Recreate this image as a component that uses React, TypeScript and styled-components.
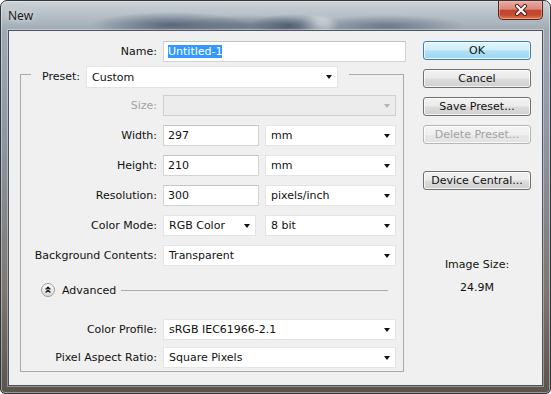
import styled, { createGlobalStyle } from "styled-components";

const Global = createGlobalStyle`
  html, body { margin: 0; padding: 0; background: #fff; }
  * { box-sizing: border-box; }
`;

const Window = styled.div`
  width: 551px; height: 394px;
  display: flex; flex-direction: column;
  padding: 0 7px 7px;
  border: 1px solid #30363d;
  border-radius: 7px 7px 5px 5px;
  box-shadow: inset 0 0 0 1px rgba(255,255,255,0.4);
  background:
    radial-gradient(ellipse 80px 13px at 170px 24px, rgba(35,50,75,0.6), transparent),
    radial-gradient(ellipse 70px 11px at 245px 25px, rgba(45,60,85,0.45), transparent),
    radial-gradient(ellipse 40px 12px at 288px 25px, rgba(35,50,75,0.6), transparent),
    radial-gradient(ellipse 20px 10px at 318px 23px, rgba(255,255,255,0.6), transparent),
    radial-gradient(ellipse 80px 11px at 385px 25px, rgba(50,65,90,0.5), transparent),
    linear-gradient(180deg, #ccd2d7 0px, #bac3ca 12px, #9ea9b3 30px, #8d96a0 140px, #7d7771 290px, #5b524b 394px);
`;

const TitleBar = styled.div`
  height: 29px; flex: none;
  display: flex; align-items: flex-start;
`;

const Title = styled.div`
  align-self: center;
  font: 12px "Noto Sans", "DejaVu Sans", sans-serif;
  color: #1b1b1b;
  text-shadow: 0 0 6px rgba(255,255,255,0.9);
`;

const CloseButton = styled.div`
  margin-left: auto;
  width: 45px; height: 19px;
  display: flex; align-items: center; justify-content: center;
  border: 1px solid #5a2219;
  border-top: none;
  border-radius: 0 0 5px 5px;
  box-shadow: inset 0 0 0 1px rgba(255,200,190,0.45);
  background: linear-gradient(180deg, #e9ac9f 0%, #d88a7b 45%, #c2432e 52%, #c44a31 78%, #e0804f 100%);
`;

const Client = styled.div`
  flex: 1;
  display: flex; gap: 17px;
  padding: 10px 10px 0 11px;
  background: #f0f0f0;
  border: 1px solid #4b545e;
  box-shadow: 0 0 0 1px rgba(255,255,255,0.35);
  font: 11px "DejaVu Sans", sans-serif;
  color: #111;
`;

const FormColumn = styled.div`
  width: 386px;
  display: flex; flex-direction: column;
`;

const Row = styled.div`
  display: flex; align-items: center; gap: 6px;
`;

const Label = styled.div<{ $w?: number; $off?: boolean }>`
  width: ${p => (p.$w ? `${p.$w}px` : "auto")};
  flex: none;
  text-align: right;
  white-space: nowrap;
  color: ${p => (p.$off ? "#a2a2a2" : "#111")};
`;

const TextField = styled.div<{ $w: number }>`
  width: ${p => p.$w}px; height: 21px;
  display: flex; align-items: center;
  padding-left: 4px;
  background: #fff;
  border: 1px solid #d4d4d4;
  border-top-color: #c4c4c4;
  white-space: nowrap;
`;

const Selected = styled.span`
  background: #3399ff;
  color: #fff;
`;

const Select = styled.div<{ $w: number; $h?: number; $off?: boolean; $mr?: number }>`
  width: ${p => p.$w}px; height: ${p => p.$h ?? 21}px;
  flex: none;
  margin-right: ${p => p.$mr ?? 0}px;
  display: flex; align-items: center; justify-content: space-between;
  padding: 0 5px 0 5px;
  background: ${p => (p.$off ? "#ececec" : "#fff")};
  border: 1px solid ${p => (p.$off ? "#cfcfcf" : "#e4e4e4")};
  white-space: nowrap;
`;

const Arrow = styled.span<{ $off?: boolean }>`
  width: 0; height: 0;
  border-left: 3.5px solid transparent;
  border-right: 3.5px solid transparent;
  border-top: 4px solid ${p => (p.$off ? "#b4b4b4" : "#111")};
`;

const Group = styled.div`
  margin-top: 12px;
  width: 384px;
  display: flex; flex-direction: column;
  border: 1px solid #a9a9a9;
  border-top: none;
  padding-bottom: 3px;
`;

const GroupHead = styled.div`
  margin-top: -8px;
  height: 22px;
  display: flex; align-items: flex-start;
`;

const Tick = styled.div`
  width: 10px; margin-top: 8px;
  border-top: 1px solid #a9a9a9;
`;

const HeadLabel = styled.div`
  margin-left: 11px; margin-right: 6px;
  line-height: 22px;
`;

const Rule = styled.div`
  flex: 1;
  margin-left: 11px;
  margin-top: 8px;
  border-top: 1px solid #a9a9a9;
`;

const Fields = styled.div<{ $gap: number; $top: number }>`
  display: flex; flex-direction: column;
  gap: ${p => p.$gap}px;
  margin-top: ${p => p.$top}px;
`;

const AdvancedRow = styled.div`
  margin-top: 17px;
  height: 14px;
  display: flex; align-items: center;
  padding: 0 15px 0 20px;
`;

const AdvancedText = styled.span`
  margin-left: 7px; margin-right: 5px;
`;

const AdvLine = styled.div`
  flex: 1;
  border-top: 1px solid #a9a9a9;
`;

const SideColumn = styled.div`
  width: 108px;
  display: flex; flex-direction: column; align-items: stretch;
`;

const Buttons = styled.div`
  display: flex; flex-direction: column; gap: 9px;
`;

const Button = styled.div<{ $primary?: boolean; $off?: boolean; $top?: number }>`
  height: 19px;
  margin-top: ${p => p.$top ?? 0}px;
  display: flex; align-items: center; justify-content: center;
  border-radius: 3px;
  border: 1px solid ${p => (p.$primary ? "#3c7fb1" : p.$off ? "#b4b7ba" : "#707070")};
  color: ${p => (p.$off ? "#a0a0a0" : "#111")};
  box-shadow: inset 0 0 0 1px rgba(255,255,255,0.75);
  background: ${p =>
    p.$primary
      ? "linear-gradient(180deg, #e4f5fd 0%, #cdeefc 48%, #b1e1f7 52%, #a0d7f2 100%)"
      : p.$off
      ? "linear-gradient(180deg, #f4f4f4 0%, #f0f0f0 50%, #e8e8e8 52%, #e2e2e2 100%)"
      : "linear-gradient(180deg, #f2f2f2 0%, #ebebeb 48%, #dddddd 52%, #cfcfcf 100%)"};
`;

const SizeInfo = styled.div`
  margin-top: 68px;
  display: flex; flex-direction: column; align-items: center; gap: 9px;
  line-height: 14px;
`;

function CloseGlyph() {
  return (
    <svg width="14" height="12" viewBox="0 0 14 12">
      <path d="M3 2 L11 10 M11 2 L3 10" stroke="#4a1c16" strokeWidth="4" strokeLinecap="round" />
      <path d="M3 2 L11 10 M11 2 L3 10" stroke="#fff" strokeWidth="2.2" strokeLinecap="round" />
    </svg>
  );
}

function AdvancedIcon() {
  return (
    <svg width="14" height="14" viewBox="0 0 14 14">
      <defs>
        <linearGradient id="adv" x1="0" y1="0" x2="0" y2="1">
          <stop offset="0" stopColor="#ffffff" />
          <stop offset="1" stopColor="#d8d8d8" />
        </linearGradient>
      </defs>
      <circle cx="7" cy="7" r="6.5" fill="url(#adv)" stroke="#9a9a9a" />
      <path d="M4.6 6.4 L7 4.1 L9.4 6.4 M4.6 9.6 L7 7.3 L9.4 9.6" fill="none" stroke="#222" strokeWidth="1.4" />
    </svg>
  );
}

function Dropdown({ w, value, off, mr }: { w: number; value?: string; off?: boolean; mr?: number }) {
  return (
    <Select $w={w} $off={off} $mr={mr}>
      <span>{value}</span>
      <Arrow $off={off} />
    </Select>
  );
}

export default function App() {
  return (
    <>
      <Global />
      <Window>
        <TitleBar>
          <Title>New</Title>
          <CloseButton><CloseGlyph /></CloseButton>
        </TitleBar>
        <Client>
          <FormColumn>
            <Row>
              <Label $w={137}>Name:</Label>
              <TextField $w={243}><Selected>Untitled-1</Selected></TextField>
            </Row>
            <Group>
              <GroupHead>
                <Tick />
                <HeadLabel>Preset:</HeadLabel>
                <Select $w={252} $h={22}>
                  <span>Custom</span>
                  <Arrow />
                </Select>
                <Rule />
              </GroupHead>
              <Fields $gap={9} $top={7}>
                <Row>
                  <Label $w={136} $off>Size:</Label>
                  <Dropdown w={233} off />
                </Row>
                <Row>
                  <Label $w={136}>Width:</Label>
                  <TextField $w={96}>297</TextField>
                  <Dropdown w={131} value="mm" />
                </Row>
                <Row>
                  <Label $w={136}>Height:</Label>
                  <TextField $w={96}>210</TextField>
                  <Dropdown w={131} value="mm" />
                </Row>
                <Row>
                  <Label $w={136}>Resolution:</Label>
                  <TextField $w={96}>300</TextField>
                  <Dropdown w={131} value="pixels/inch" />
                </Row>
                <Row>
                  <Label $w={136}>Color Mode:</Label>
                  <Dropdown w={93} value="RGB Color" mr={3} />
                  <Dropdown w={131} value="8 bit" />
                </Row>
                <Row>
                  <Label $w={136}>Background Contents:</Label>
                  <Dropdown w={233} value="Transparent" />
                </Row>
              </Fields>
              <AdvancedRow>
                <AdvancedIcon />
                <AdvancedText>Advanced</AdvancedText>
                <AdvLine />
              </AdvancedRow>
              <Fields $gap={7} $top={22}>
                <Row>
                  <Label $w={136}>Color Profile:</Label>
                  <Dropdown w={233} value="sRGB IEC61966-2.1" />
                </Row>
                <Row>
                  <Label $w={136}>Pixel Aspect Ratio:</Label>
                  <Dropdown w={233} value="Square Pixels" />
                </Row>
              </Fields>
            </Group>
          </FormColumn>
          <SideColumn>
            <Buttons>
              <Button $primary>OK</Button>
              <Button>Cancel</Button>
              <Button>Save Preset...</Button>
              <Button $off>Delete Preset...</Button>
              <Button $top={18}>Device Central...</Button>
            </Buttons>
            <SizeInfo>
              <span>Image Size:</span>
              <span>24.9M</span>
            </SizeInfo>
          </SideColumn>
        </Client>
      </Window>
    </>
  );
}
